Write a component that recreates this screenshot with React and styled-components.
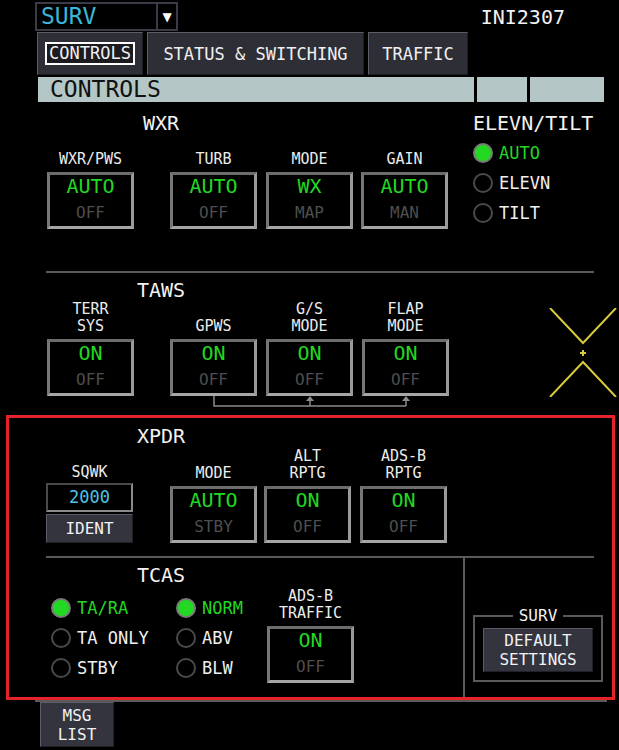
import React from 'react'
import styled, { createGlobalStyle } from 'styled-components'

const GREEN = '#22d822'
const LINE = '#5a5a5a'

const GlobalStyle = createGlobalStyle`
  html, body { margin: 0; padding: 0; background: #000; }
  body { font-family: "DejaVu Sans Mono", "Liberation Mono", monospace; }
`

function Switch({ label, on, off, ml }) {
  return (
    <SwitchCol $ml={ml}>
      <SwitchLabel>{label.map(l => <span key={l}>{l}</span>)}</SwitchLabel>
      <SwitchBox>
        <OnValue>{on}</OnValue>
        <OffValue>{off}</OffValue>
      </SwitchBox>
    </SwitchCol>
  )
}

function Radio({ label, on }) {
  return (
    <RadioRow $on={on}>
      <Dot $on={on} />
      {label}
    </RadioRow>
  )
}

export default function App() {
  return (
    <>
      <GlobalStyle />
      <Screen>
        <TopRow>
          <Dropdown>
            <DropText>SURV</DropText>
            <DropArrow>▼</DropArrow>
          </Dropdown>
          <UnitId>INI2307</UnitId>
        </TopRow>

        <Tabs>
          <Tab $w={106}><TabSelected>CONTROLS</TabSelected></Tab>
          <Tab $w={217}>STATUS &amp; SWITCHING</Tab>
          <Tab $w={100}>TRAFFIC</Tab>
        </Tabs>

        <HeaderBar>
          <HeaderCell $w={436}>CONTROLS</HeaderCell>
          <HeaderCell $w={50} />
          <HeaderCell $w={74} />
        </HeaderBar>

        <WxrSection>
          <LeftPart>
            <Title $ml={111}>WXR</Title>
            <SwitchRow>
              <Switch label={['WXR/PWS']} on="AUTO" off="OFF" ml={47} />
              <Switch label={['TURB']} on="AUTO" off="OFF" ml={36} />
              <Switch label={['MODE']} on="WX" off="MAP" ml={9} />
              <Switch label={['GAIN']} on="AUTO" off="MAN" ml={8} />
            </SwitchRow>
          </LeftPart>
          <ElevGroup>
            <GroupTitle>ELEVN/TILT</GroupTitle>
            <RadioList>
              <Radio label="AUTO" on />
              <Radio label="ELEVN" />
              <Radio label="TILT" />
            </RadioList>
          </ElevGroup>
        </WxrSection>

        <Divider $ml={46} />

        <TawsSection>
          <LeftPart>
            <Title $ml={111}>TAWS</Title>
            <SwitchRow>
              <Switch label={['TERR', 'SYS']} on="ON" off="OFF" ml={47} />
              <Switch label={['GPWS']} on="ON" off="OFF" ml={36} />
              <Switch label={['G/S', 'MODE']} on="ON" off="OFF" ml={9} />
              <Switch label={['FLAP', 'MODE']} on="ON" off="OFF" ml={9} />
            </SwitchRow>
            <Connector width="449" height="14" viewBox="0 0 449 14">
              <path d="M214 0 V10 H406 M310 10 V4 M406 10 V4" stroke="#8a8a8a" strokeWidth="1.5" fill="none" />
              <path d="M306 5 L310 0 L314 5 Z M402 5 L406 0 L410 5 Z" fill="#8a8a8a" />
            </Connector>
          </LeftPart>
          <XMark width="71" height="89" viewBox="0 0 71 89">
            <path
              d="M2 0 L35 35 L68 0 M2 89 L35 54 L68 89 M32 45 H38 M35 42 V48"
              stroke="#d8ca3a"
              strokeWidth="2"
              fill="none"
            />
          </XMark>
        </TawsSection>

        <Highlight>
          <XpdrSection>
            <Title $ml={102}>XPDR</Title>
            <SwitchRow>
              <SqwkCol>
                <SwitchLabel $mb={2}><span>SQWK</span></SwitchLabel>
                <SqwkField>2000</SqwkField>
                <IdentButton>IDENT</IdentButton>
              </SqwkCol>
              <Switch label={['MODE']} on="AUTO" off="STBY" ml={37} />
              <Switch label={['ALT', 'RPTG']} on="ON" off="OFF" ml={7} />
              <Switch label={['ADS-B', 'RPTG']} on="ON" off="OFF" ml={9} />
            </SwitchRow>
          </XpdrSection>

          <Divider $ml={37} />

          <LowerRow>
            <TcasPart>
              <TcasGroup>
                <Title $ml={60}>TCAS</Title>
                <RadioCols>
                  <RadioCol $w={125}>
                    <Radio label="TA/RA" on />
                    <Radio label="TA ONLY" />
                    <Radio label="STBY" />
                  </RadioCol>
                  <RadioCol $w={91}>
                    <Radio label="NORM" on />
                    <Radio label="ABV" />
                    <Radio label="BLW" />
                  </RadioCol>
                </RadioCols>
              </TcasGroup>
              <Switch label={['ADS-B', 'TRAFFIC']} on="ON" off="OFF" ml={0} />
            </TcasPart>
            <SurvCell>
              <Frame>
                <Legend>SURV</Legend>
                <DefaultButton>
                  <span>DEFAULT</span>
                  <span>SETTINGS</span>
                </DefaultButton>
              </Frame>
            </SurvCell>
          </LowerRow>
        </Highlight>

        <Footer>
          <MsgButton>
            <span>MSG</span>
            <span>LIST</span>
          </MsgButton>
        </Footer>
      </Screen>
    </>
  )
}

const Screen = styled.div`
  width: 619px;
  height: 750px;
  background: #000;
  color: #ececec;
  overflow: hidden;
`

const TopRow = styled.div`
  display: flex;
  justify-content: space-between;
  align-items: flex-start;
  height: 32px;
  padding: 0 54px 0 35px;
  box-sizing: border-box;
`

const Dropdown = styled.div`
  display: flex;
  margin-top: 2px;
  width: 143px;
  height: 29px;
  box-sizing: border-box;
  border: 2px solid #3a3b47;
`

const DropText = styled.div`
  flex: 1;
  padding-left: 4px;
  color: #3cb6d8;
  font-size: 23px;
  line-height: 25px;
`

const DropArrow = styled.div`
  width: 18px;
  border-left: 2px solid #3a3b47;
  display: flex;
  align-items: center;
  justify-content: center;
  color: #fff;
  font-family: "DejaVu Sans", sans-serif;
  font-size: 12px;
`

const UnitId = styled.div`
  margin-top: 6px;
  font-size: 20px;
  line-height: 22px;
  color: #f2f2f2;
`

const Tabs = styled.div`
  display: flex;
  gap: 4px;
  padding-left: 37px;
  height: 43px;
`

const Tab = styled.div`
  width: ${p => p.$w}px;
  height: 43px;
  box-sizing: border-box;
  background: #2d2e36;
  border: 1px solid;
  border-color: #5c5d67 #1c1d22 #1c1d22 #5c5d67;
  display: flex;
  align-items: center;
  justify-content: center;
  font-size: 17px;
  color: #f0f0f0;
`

const TabSelected = styled.span`
  border: 2px solid #fff;
  padding: 0 2px;
  line-height: 19px;
  background: #1b1b20;
`

const HeaderBar = styled.div`
  display: flex;
  gap: 3px;
  margin: 2px 0 0 38px;
  height: 25px;
`

const HeaderCell = styled.div`
  width: ${p => p.$w}px;
  background: #b4c6c5;
  color: #111;
  font-size: 23px;
  line-height: 25px;
  padding-left: 12px;
  box-sizing: border-box;
`

const WxrSection = styled.section`
  display: flex;
  height: 169px;
  padding-top: 10px;
  box-sizing: border-box;
`

const TawsSection = styled.section`
  display: flex;
  height: 142px;
  padding-top: 6px;
  box-sizing: border-box;
`

const LeftPart = styled.div`
  width: 449px;
  display: flex;
  flex-direction: column;
`

const Title = styled.div`
  margin-left: ${p => p.$ml}px;
  width: 100px;
  text-align: center;
  font-size: 20px;
  line-height: 22px;
  color: #f2f2f2;
`

const SwitchRow = styled.div`
  display: flex;
  align-items: flex-end;
`

const SwitchCol = styled.div`
  display: flex;
  flex-direction: column;
  align-items: center;
  width: 87px;
  margin-left: ${p => p.$ml}px;
`

const SwitchLabel = styled.div`
  height: 34px;
  margin-bottom: ${p => (p.$mb ?? 4)}px;
  display: flex;
  flex-direction: column;
  justify-content: flex-end;
  align-items: center;
  font-size: 15px;
  line-height: 17px;
  color: #ececec;
`

const SwitchBox = styled.div`
  width: 87px;
  height: 57px;
  box-sizing: border-box;
  border: 3px solid;
  border-color: #6c6c6c #9a9a9a #a6a6a6 #777;
  display: flex;
  flex-direction: column;
  align-items: center;
  gap: 7px;
`

const OnValue = styled.div`
  color: ${GREEN};
  font-size: 20px;
  line-height: 22px;
`

const OffValue = styled.div`
  color: #4e4e4e;
  font-size: 16px;
  line-height: 18px;
`

const ElevGroup = styled.div`
  margin-left: 24px;
`

const GroupTitle = styled.div`
  font-size: 20px;
  line-height: 22px;
  color: #f2f2f2;
`

const RadioList = styled.div`
  margin-top: 4px;
`

const RadioRow = styled.div`
  display: flex;
  align-items: center;
  gap: 6px;
  height: 30px;
  font-size: 17px;
  white-space: pre;
  color: ${p => (p.$on ? GREEN : '#f0f0f0')};
`

const Dot = styled.span`
  width: 20px;
  height: 20px;
  box-sizing: border-box;
  border-radius: 50%;
  border: 2px solid ${p => (p.$on ? '#7a7a7a' : '#4a4a4a')};
  background: ${p => (p.$on ? GREEN : 'transparent')};
`

const Divider = styled.div`
  height: 2px;
  width: 548px;
  margin-left: ${p => p.$ml}px;
  background: ${LINE};
`

const Connector = styled.svg`
  display: block;
`

const XMark = styled.svg`
  display: block;
  margin: 29px 0 0 99px;
`

const Highlight = styled.div`
  margin-left: 6px;
  width: 609px;
  height: 285px;
  box-sizing: border-box;
  border: 3px solid #e5232a;
`

const XpdrSection = styled.section`
  height: 138px;
  padding-top: 7px;
  box-sizing: border-box;
`

const SqwkCol = styled.div`
  display: flex;
  flex-direction: column;
  width: 87px;
  margin-left: 37px;
`

const SqwkField = styled.div`
  height: 29px;
  box-sizing: border-box;
  border: 2px solid;
  border-color: #4a4a4a #8a8a8a #8a8a8a #4a4a4a;
  background: #000;
  color: #4fc2e6;
  font-size: 17px;
  line-height: 25px;
  text-align: center;
`

const IdentButton = styled.div`
  margin-top: 2px;
  height: 29px;
  box-sizing: border-box;
  background: #33343e;
  border: 1px solid;
  border-color: #5a5b66 #202128 #202128 #5a5b66;
  color: #f2f2f2;
  font-size: 16px;
  line-height: 27px;
  text-align: center;
`

const LowerRow = styled.div`
  display: flex;
  height: 139px;
`

const TcasPart = styled.div`
  width: 454px;
  display: flex;
  align-items: flex-end;
  padding: 6px 0 14px;
  box-sizing: border-box;
`

const TcasGroup = styled.div`
  margin-left: 42px;
`

const RadioCols = styled.div`
  display: flex;
  margin-top: 7px;
`

const RadioCol = styled.div`
  width: ${p => p.$w}px;
`

const SurvCell = styled.div`
  flex: 1;
  border-left: 2px solid ${LINE};
  display: flex;
  align-items: flex-end;
  padding: 0 8px 15px 8px;
`

const Frame = styled.fieldset`
  margin: 0;
  padding: 3px 8px 8px;
  border: 2px solid ${LINE};
`

const Legend = styled.legend`
  margin: 0 auto;
  padding: 0 6px;
  font-size: 16px;
  line-height: 19px;
  color: #f2f2f2;
`

const DefaultButton = styled.div`
  width: 110px;
  height: 44px;
  box-sizing: border-box;
  background: #33343e;
  border: 1px solid;
  border-color: #5a5b66 #202128 #202128 #5a5b66;
  display: flex;
  flex-direction: column;
  align-items: center;
  justify-content: center;
  font-size: 16px;
  line-height: 19px;
  color: #f2f2f2;
`

const Footer = styled.div`
  margin-left: 35px;
  width: 572px;
  border-top: 2px solid ${LINE};
`

const MsgButton = styled.div`
  margin-left: 5px;
  width: 74px;
  height: 45px;
  box-sizing: border-box;
  background: #33343e;
  border: 1px solid;
  border-color: #5a5b66 #202128 #202128 #5a5b66;
  display: flex;
  flex-direction: column;
  align-items: center;
  justify-content: center;
  font-size: 16px;
  line-height: 19px;
  color: #f2f2f2;
`
